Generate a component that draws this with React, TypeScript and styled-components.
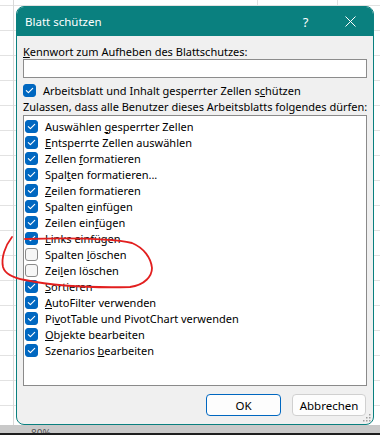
import React from "react";
import styled, { createGlobalStyle } from "styled-components";

const GlobalStyle = createGlobalStyle`
  html, body {
    margin: 0;
    padding: 0;
  }
  body {
    width: 380px;
    height: 435px;
    overflow: hidden;
    font-family: "Noto Sans", "Open Sans", sans-serif;
    background-color: #ffffff;
    background-image:
      linear-gradient(to right, transparent 13px, #d9d9d9 13px, #d9d9d9 14px, transparent 14px),
      linear-gradient(to right, transparent 257px, #e2e2e2 257px, #e2e2e2 258px, transparent 258px),
      linear-gradient(to right, transparent 337px, #e2e2e2 337px, #e2e2e2 338px, transparent 338px),
      repeating-linear-gradient(to bottom, transparent 0, transparent 5px, #e2e2e2 5px, #e2e2e2 6px, transparent 6px, transparent 25px);
  }
`;

const ACCENT = "#0067c0";
const TEAL = "#0a807f";

const Page = styled.div`
  position: relative;
  width: 380px;
  height: 435px;
  display: flex;
  flex-direction: column;
`;

const Dialog = styled.div`
  position: relative;
  box-sizing: border-box;
  margin: 6px 0 0 16px;
  width: 358px;
  height: 419px;
  border: 1px solid ${TEAL};
  border-radius: 8px;
  background: #f0f0f0;
  overflow: hidden;
  display: flex;
  flex-direction: column;
`;

const TitleBar = styled.div`
  height: 29px;
  flex: none;
  background: ${TEAL};
  color: #fff;
  display: flex;
  align-items: center;
  padding: 0 0 0 8px;
  font-size: 11.5px;
`;

const Title = styled.div`
  flex: 1;
  padding-bottom: 1px;
`;

const TitleButton = styled.div`
  width: 45px;
  height: 29px;
  display: flex;
  align-items: center;
  justify-content: center;
  font-size: 13px;
`;

const Body = styled.div`
  flex: 1;
  display: flex;
  flex-direction: column;
  padding: 8px 6px 0 6px;
  color: #000;
  font-size: 11px;
`;

const Label = styled.div<{ $top?: number }>`
  height: 15px;
  line-height: 15px;
  white-space: nowrap;
  margin-top: ${(p) => p.$top ?? 0}px;
`;

const TextInput = styled.div`
  box-sizing: border-box;
  height: 19px;
  background: #fff;
  border: 1px solid #8c8c8c;
`;

const Row = styled.div<{ $gap: number; $top?: number; $pad?: number }>`
  display: flex;
  align-items: center;
  height: 16px;
  gap: ${(p) => p.$gap}px;
  margin-top: ${(p) => p.$top ?? 0}px;
  padding-left: ${(p) => p.$pad ?? 0}px;
  white-space: nowrap;
`;

const Box = styled.span<{ $checked: boolean }>`
  box-sizing: border-box;
  flex: none;
  width: 13px;
  height: 13px;
  border-radius: 3px;
  display: inline-flex;
  align-items: center;
  justify-content: center;
  background: ${(p) => (p.$checked ? ACCENT : "#f6f6f6")};
  border: 1px solid ${(p) => (p.$checked ? ACCENT : "#8a8a8a")};
`;

const Key = styled.span`
  text-decoration: underline;
  text-underline-offset: 1px;
`;

const ListBox = styled.div`
  box-sizing: border-box;
  margin-top: 1px;
  height: 271px;
  background: #fff;
  border: 1px solid #8a8a8a;
  padding-top: 2px;
  display: flex;
  flex-direction: column;
`;

const Buttons = styled.div`
  display: flex;
  justify-content: flex-end;
  gap: 11px;
  margin-top: 8px;
  padding-right: 1px;
`;

const Button = styled.div<{ $primary?: boolean }>`
  box-sizing: border-box;
  width: ${(p) => (p.$primary ? 75 : 74)}px;
  height: 22px;
  border-radius: 4px;
  background: #fdfdfd;
  border: 1px solid ${(p) => (p.$primary ? ACCENT : "#d0d0d0")};
  display: flex;
  align-items: center;
  justify-content: center;
  font-size: 11.5px;
`;

const Grip = styled.svg`
  position: absolute;
  right: 1px;
  bottom: 1px;
`;

const StatusStrip = styled.div`
  height: 8px;
  background: #c9c9c9;
  overflow: hidden;
  font-size: 10px;
  line-height: 8px;
  color: #555;
  padding-left: 31px;
  span {
    position: relative;
    top: 4px;
  }
`;

const TaskEdge = styled.div`
  height: 2px;
  background: #1e1e1e;
`;

const Scribble = styled.svg`
  position: absolute;
  left: 0;
  top: 0;
  pointer-events: none;
`;

const Check = () => (
  <svg width="11" height="11" viewBox="0 0 11 11">
    <polyline
      points="2.3,5.6 4.4,7.7 8.7,3.3"
      fill="none"
      stroke="#fff"
      strokeWidth="1.1"
      strokeLinecap="round"
      strokeLinejoin="round"
    />
  </svg>
);

type Item = { pre: string; key: string; post: string; checked: boolean };

const items: Item[] = [
  { pre: "Auswählen ", key: "g", post: "esperrter Zellen", checked: true },
  { pre: "", key: "E", post: "ntsperrte Zellen auswählen", checked: true },
  { pre: "Zellen ", key: "f", post: "ormatieren", checked: true },
  { pre: "Spal", key: "t", post: "en formatieren...", checked: true },
  { pre: "", key: "Z", post: "eilen formatieren", checked: true },
  { pre: "Spalten ", key: "e", post: "infügen", checked: true },
  { pre: "Zeilen ein", key: "f", post: "ügen", checked: true },
  { pre: "", key: "L", post: "inks einfügen", checked: true },
  { pre: "Spalten ", key: "l", post: "öschen", checked: false },
  { pre: "Zei", key: "l", post: "en löschen", checked: false },
  { pre: "", key: "S", post: "ortieren", checked: true },
  { pre: "", key: "A", post: "utoFilter verwenden", checked: true },
  { pre: "Pi", key: "v", post: "otTable und PivotChart verwenden", checked: true },
  { pre: "", key: "O", post: "bjekte bearbeiten", checked: true },
  { pre: "Szenarios ", key: "b", post: "earbeiten", checked: true },
];

export default function App() {
  return (
    <>
      <GlobalStyle />
      <Page>
        <Dialog>
          <TitleBar>
            <Title>Blatt schützen</Title>
            <TitleButton>?</TitleButton>
            <TitleButton>
              <svg width="11" height="11" viewBox="0 0 11 11">
                <path d="M0.5 0.5 L10.5 10.5 M10.5 0.5 L0.5 10.5" stroke="#fff" strokeWidth="1" />
              </svg>
            </TitleButton>
          </TitleBar>
          <Body>
            <Label>
              <Key>K</Key>ennwort zum Aufheben des Blattschutzes:
            </Label>
            <TextInput />
            <Row $gap={7} $top={4}>
              <Box $checked>
                <Check />
              </Box>
              <span>
                Arbeitsblatt und Inhalt gesperrter Zellen s<Key>c</Key>hützen
              </span>
            </Row>
            <Label $top={1}>Zulassen, dass alle Benutzer dieses Arbeitsblatts folgendes dürfen:</Label>
            <ListBox>
              {items.map((it, i) => (
                <Row key={i} $gap={7} $pad={1}>
                  <Box $checked={it.checked}>{it.checked && <Check />}</Box>
                  <span>
                    {it.pre}
                    <Key>{it.key}</Key>
                    {it.post}
                  </span>
                </Row>
              ))}
            </ListBox>
            <Buttons>
              <Button $primary>OK</Button>
              <Button>Abbrechen</Button>
            </Buttons>
          </Body>
          <Grip width="10" height="10" viewBox="0 0 10 10">
            {[
              [8, 2],
              [8, 5],
              [5, 5],
              [8, 8],
              [5, 8],
              [2, 8],
            ].map(([x, y], i) => (
              <rect key={i} x={x - 1} y={y - 1} width="1.5" height="1.5" fill="#a0a0a0" />
            ))}
          </Grip>
        </Dialog>
        <StatusStrip>
          <span>80%</span>
        </StatusStrip>
        <TaskEdge />
        <Scribble width="380" height="435" viewBox="0 0 380 435">
          <path
            d="M 12 237 C 5 246, 1 258, 3 267 C 5 274, 14 278, 25 280 C 50 285, 90 288, 130 287 C 145 285, 152 276, 152 268 C 151 258, 144 248, 132 243 C 110 238, 60 238, 25 239"
            fill="none"
            stroke="#e21f1f"
            strokeWidth="1.8"
            strokeLinecap="round"
          />
        </Scribble>
      </Page>
    </>
  );
}
